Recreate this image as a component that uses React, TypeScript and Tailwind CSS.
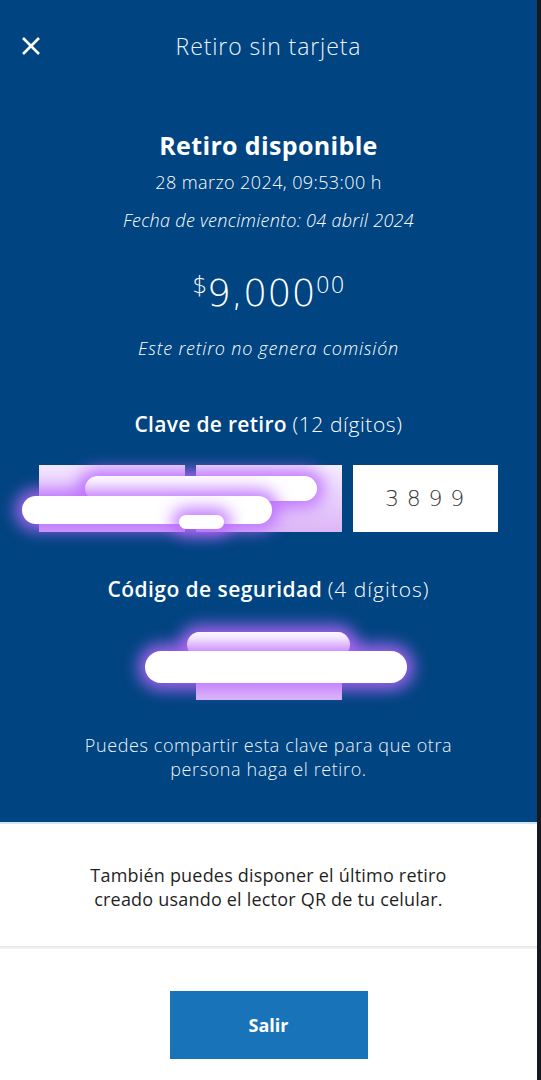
import React from "react";

const glow = "shadow-[0_0_16px_7px_rgba(186,104,255,0.85)]";
const dv = { fontFamily: "'DejaVu Sans', 'Open Sans', sans-serif" };

export default function App() {
  return (
    <div
      className="flex w-[541px] min-h-[1080px] bg-white"
      style={{ fontFamily: "'Open Sans', Roboto, sans-serif" }}
    >
      <div className="flex-1 flex flex-col">
        {/* Blue section */}
        <div className="bg-[#004481] h-[824px] flex flex-col items-center border-b-[2px] border-[#cfe6f5] text-white">
          <div className="w-full h-[92px] grid grid-cols-[64px_1fr_64px] items-center">
            <div className="pl-[21px] flex items-center">
              <svg width="20" height="20" viewBox="0 0 20 20">
                <path d="M2 2 L18 18 M18 2 L2 18" stroke="#ffffff" strokeWidth="2.6" strokeLinecap="butt" />
              </svg>
            </div>
            <div className="text-center text-[23px] font-light tracking-[0.9px] text-[#eef3f9] leading-[30px]">
              Retiro sin tarjeta
            </div>
            <div />
          </div>

          <div className="mt-[38px] text-[25px] font-bold leading-[30px] tracking-[0.35px]">Retiro disponible</div>
          <div className="mt-[10px] text-[18px] font-light tracking-[0.4px] leading-[24px]">28 marzo 2024, 09:53:00 h</div>
          <div className="mt-[14px] text-[18px] font-light italic tracking-[0.3px] leading-[24px]">
            Fecha de vencimiento: 04 abril 2024
          </div>

          <div className="mt-[38px] h-[50px] flex items-start font-light leading-none" style={dv}>
            <span className="text-[23px] mt-[4px]">$</span>
            <span className="text-[38px] mt-[4px]">9,000</span>
            <span className="text-[23px] mt-[4px]">00</span>
          </div>

          <div className="mt-[16px] text-[18px] font-light italic tracking-[0.8px] leading-[24px]">
            Este retiro no genera comisión
          </div>

          <div className="mt-[50px] text-[21px] leading-[28px]">
            <span className="font-semibold tracking-[0.3px]">Clave de retiro</span>{" "}
            <span className="font-light tracking-[0.6px]">(12 dígitos)</span>
          </div>

          <div className="relative mt-[27px] flex gap-[11px]">
            <div className="w-[146px] h-[67px] bg-gradient-to-b from-[#f3e6ff] to-[#d8b0f6]" />
            <div className="w-[146px] h-[67px] bg-gradient-to-b from-[#f6ecff] to-[#dcb6f7]" />
            <div
              className="w-[145px] h-[67px] bg-white flex items-center justify-center text-[22px] tracking-[0.35em] text-[#333] font-light pl-[6px]"
              style={dv}
            >
              3899
            </div>
            {/* redaction scribbles */}
            <div className={`absolute left-[46px] top-[11px] w-[232px] h-[25px] rounded-full bg-white ${glow}`} />
            <div className={`absolute left-[-17px] top-[31px] w-[250px] h-[28px] rounded-full bg-white ${glow}`} />
            <div className={`absolute left-[140px] top-[50px] w-[45px] h-[14px] rounded-full bg-white ${glow}`} />
          </div>

          <div className="mt-[43px] text-[21px] leading-[28px]">
            <span className="font-semibold tracking-[0.45px]">Código de seguridad</span>{" "}
            <span className="font-light tracking-[1px]">(4 dígitos)</span>
          </div>

          <div className="relative mt-[29px]">
            <div className="w-[146px] h-[68px] bg-gradient-to-b from-[#f5eaff] to-[#dcb8f7]" />
            <div className={`absolute left-[-9px] top-[0px] w-[163px] h-[25px] rounded-full bg-white ${glow}`} />
            <div className={`absolute left-[-51px] top-[19px] w-[262px] h-[32px] rounded-full bg-white ${glow}`} />
          </div>

          <div className="mt-[33px] text-[18px] font-light tracking-[0.6px] leading-[24px] text-center text-[#eef3f9]">
            Puedes compartir esta clave para que otra
            <br />
            persona haga el retiro.
          </div>
        </div>

        {/* White info section */}
        <div className="h-[122px] pt-[39px] text-center text-[18px] tracking-[0.2px] leading-[24px] text-[#1f1f1f]">
          También puedes disponer el último retiro
          <br />
          creado usando el lector QR de tu celular.
        </div>
        <div className="h-[3px] bg-gradient-to-b from-[#e6e6e6] to-[#f6f6f6]" />

        <div className="flex justify-center pt-[42px]">
          <button className="w-[198px] h-[68px] bg-[#1973b8] text-white font-bold text-[18px]">
            Salir
          </button>
        </div>
      </div>
      <div className="w-[4px] bg-[#15191f]" />
    </div>
  );
}
